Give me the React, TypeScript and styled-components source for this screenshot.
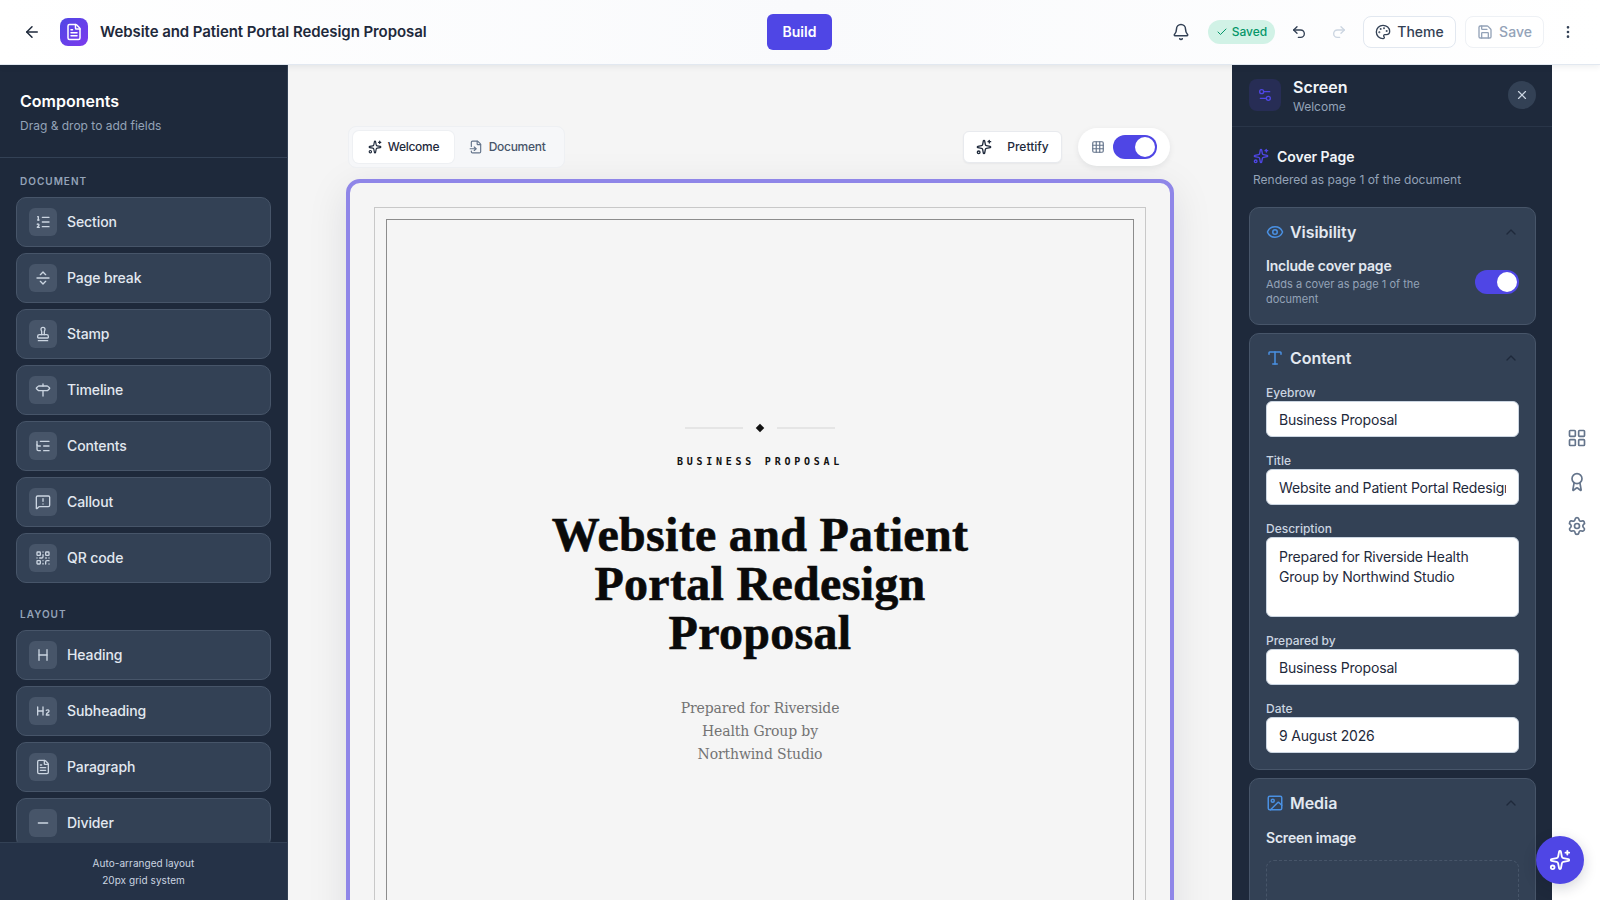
import React from 'react';
import styled, { createGlobalStyle } from 'styled-components';
import {
  ArrowLeft, Award, Bell, Check, ChevronUp, EllipsisVertical, Eye, FileInput, FileText, Grid3x3,
  Heading, Heading2, Image, LayoutGrid, ListOrdered, ListTree, MessageSquareWarning, Minus, Palette,
  QrCode, Redo2, Save, Settings, Settings2, Signpost, Sparkles, Stamp, Type, Undo2, X,
} from 'lucide-react';

const GlobalStyle = createGlobalStyle`
  html, body { margin: 0; height: 100%; overflow: hidden; }
  body { font-family: Inter, "Liberation Sans", sans-serif; background: #f5f5f5; }
  * { box-sizing: border-box; }
`;

// lucide has no line with a chevron on each side
const PageBreakIcon = ({ size = 16 }: { size?: number }) => (
  <svg width={size} height={size} viewBox="0 0 24 24" fill="none" stroke="currentColor" strokeWidth="2" strokeLinecap="round" strokeLinejoin="round">
    <path d="M3 12h18" />
    <path d="m8 7 4-4 4 4" />
    <path d="m8 17 4 4 4-4" />
  </svg>
);

const documentItems = [
  { label: 'Section', icon: ListOrdered },
  { label: 'Page break', icon: PageBreakIcon },
  { label: 'Stamp', icon: Stamp },
  { label: 'Timeline', icon: Signpost },
  { label: 'Contents', icon: ListTree },
  { label: 'Callout', icon: MessageSquareWarning },
  { label: 'QR code', icon: QrCode },
];

const layoutItems = [
  { label: 'Heading', icon: Heading },
  { label: 'Subheading', icon: Heading2 },
  { label: 'Paragraph', icon: FileText },
  { label: 'Divider', icon: Minus },
];

function App() {
  return (
    <Shell>
      <GlobalStyle />
      <Header>
        <HeaderLeft>
          <BackButton><ArrowLeft size={18} /></BackButton>
          <Logo><FileText size={18} /></Logo>
          <DocTitle>Website and Patient Portal Redesign Proposal</DocTitle>
        </HeaderLeft>
        <BuildButton>Build</BuildButton>
        <HeaderRight>
          <HeaderIcon $left={0}><Bell size={18} /></HeaderIcon>
          <SavedPill><Check size={12} />Saved</SavedPill>
          <HeaderIcon $left={13}><Undo2 size={16} /></HeaderIcon>
          <HeaderIcon $left={18} $muted><Redo2 size={16} /></HeaderIcon>
          <OutlineButton $width={93} $left={13}><Palette size={16} />Theme</OutlineButton>
          <OutlineButton $width={79} $left={9} $muted><Save size={16} />Save</OutlineButton>
          <HeaderIcon $left={13}><EllipsisVertical size={16} /></HeaderIcon>
        </HeaderRight>
      </Header>

      <Body>
        <Sidebar>
          <SidebarHead>
            <SidebarTitle>Components</SidebarTitle>
            <SidebarSub>Drag &amp; drop to add fields</SidebarSub>
          </SidebarHead>
          <SidebarList>
            <GroupLabel>Document</GroupLabel>
            <ItemStack>
              {documentItems.map((item) => (
                <Item key={item.label}>
                  <ItemIcon><item.icon size={16} /></ItemIcon>
                  <ItemLabel>{item.label}</ItemLabel>
                </Item>
              ))}
            </ItemStack>
            <GroupLabel $second>Layout</GroupLabel>
            <ItemStack>
              {layoutItems.map((item) => (
                <Item key={item.label}>
                  <ItemIcon><item.icon size={16} /></ItemIcon>
                  <ItemLabel>{item.label}</ItemLabel>
                </Item>
              ))}
            </ItemStack>
          </SidebarList>
          <SidebarFoot>
            <div>Auto-arranged layout</div>
            <div>20px grid system</div>
          </SidebarFoot>
        </Sidebar>

        <Canvas>
          <CanvasBar>
            <Tabs>
              <Tab $active><Sparkles size={14} />Welcome</Tab>
              <Tab><FileInput size={14} />Document</Tab>
            </Tabs>
            <CanvasTools>
              <PrettifyButton><Sparkles size={16} />Prettify</PrettifyButton>
              <GridToggle>
                <Grid3x3 size={14} color="#64748b" />
                <Toggle />
              </GridToggle>
            </CanvasTools>
          </CanvasBar>
          <Page>
            <OuterFrame>
              <InnerFrame>
                <Ornament>
                  <OrnamentLine />
                  <Diamond />
                  <OrnamentLine />
                </Ornament>
                <Eyebrow>Business Proposal</Eyebrow>
                <CoverTitle>Website and Patient Portal Redesign Proposal</CoverTitle>
                <CoverDescription>Prepared for Riverside Health Group by Northwind Studio</CoverDescription>
              </InnerFrame>
            </OuterFrame>
          </Page>
        </Canvas>

        <Panel>
          <PanelHead>
            <PanelIcon><Settings2 size={16} /></PanelIcon>
            <PanelHeadText>
              <PanelTitle>Screen</PanelTitle>
              <PanelSub>Welcome</PanelSub>
            </PanelHeadText>
            <CloseButton><X size={14} /></CloseButton>
          </PanelHead>
          <PanelBody>
            <CoverHead><Sparkles size={16} color="#4f46e5" />Cover Page</CoverHead>
            <CoverSub>Rendered as page 1 of the document</CoverSub>

            <Card>
              <CardHead>
                <Eye size={18} color="#4a90e2" />
                <CardTitle>Visibility</CardTitle>
                <ChevronUp size={16} color="#1e293b" />
              </CardHead>
              <IncludeRow>
                <div>
                  <IncludeTitle>Include cover page</IncludeTitle>
                  <IncludeSub>Adds a cover as page 1 of the document</IncludeSub>
                </div>
                <Toggle />
              </IncludeRow>
            </Card>

            <Card>
              <CardHead>
                <Type size={18} color="#4a90e2" />
                <CardTitle>Content</CardTitle>
                <ChevronUp size={16} color="#1e293b" />
              </CardHead>
              <FieldLabel>Eyebrow</FieldLabel>
              <TextField readOnly value="Business Proposal" />
              <FieldLabel>Title</FieldLabel>
              <TextField readOnly value="Website and Patient Portal Redesign Proposal" />
              <FieldLabel>Description</FieldLabel>
              <TextArea readOnly value="Prepared for Riverside Health Group by Northwind Studio" />
              <FieldLabel>Prepared by</FieldLabel>
              <TextField readOnly value="Business Proposal" />
              <FieldLabel>Date</FieldLabel>
              <TextField readOnly value="9 August 2026" />
            </Card>

            <Card>
              <CardHead>
                <Image size={18} color="#4a90e2" />
                <CardTitle>Media</CardTitle>
                <ChevronUp size={16} color="#1e293b" />
              </CardHead>
              <ScreenImageLabel>Screen image</ScreenImageLabel>
              <DropZone />
            </Card>
          </PanelBody>
        </Panel>

        <Rail>
          <LayoutGrid size={20} />
          <Award size={20} />
          <Settings size={20} />
        </Rail>
      </Body>

      <Fab><Sparkles size={22} /></Fab>
    </Shell>
  );
}

export default App;

const Shell = styled.div`
  height: 100vh;
  display: flex;
  flex-direction: column;
  overflow: hidden;
`;

const Header = styled.header`
  position: relative;
  z-index: 5;
  height: 65px;
  flex: none;
  display: grid;
  grid-template-columns: 1fr auto 1fr;
  align-items: center;
  padding: 0 21px 1px 22px;
  background: linear-gradient(90deg, #ffffff, #f9fafc 50%, #ffffff);
  border-bottom: 1px solid #e2e8f0;
  box-shadow: 0 2px 6px rgba(15, 23, 42, 0.07);
`;

const HeaderLeft = styled.div`
  display: flex;
  align-items: center;
`;

const BackButton = styled.div`
  width: 20px;
  display: flex;
  justify-content: center;
  color: #1e293b;
`;

const Logo = styled.div`
  width: 28px;
  height: 28px;
  margin-left: 18px;
  border-radius: 8px;
  display: flex;
  align-items: center;
  justify-content: center;
  color: #fff;
  background: linear-gradient(135deg, #4f46e5, #7c3aed);
`;

const DocTitle = styled.div`
  margin-left: 12px;
  font-size: 15px;
  font-weight: 600;
  letter-spacing: -0.07px;
  color: #1e293b;
  white-space: nowrap;
`;

const BuildButton = styled.button`
  width: 65px;
  height: 36px;
  margin-left: -2px;
  border: none;
  border-radius: 6px;
  background: #4f46e5;
  color: #fff;
  font: 600 14px Inter, sans-serif;
`;

const HeaderRight = styled.div`
  display: flex;
  align-items: center;
  justify-content: flex-end;
`;

const HeaderIcon = styled.div<{ $left: number; $muted?: boolean }>`
  width: 22px;
  margin-left: ${(p) => p.$left}px;
  display: flex;
  justify-content: center;
  color: ${(p) => (p.$muted ? '#cbd5e1' : '#334155')};
`;

const SavedPill = styled.div`
  width: 67px;
  height: 24px;
  margin-left: 16px;
  border-radius: 12px;
  display: flex;
  align-items: center;
  justify-content: center;
  gap: 4px;
  background: #d1f2e6;
  color: #059669;
  font-size: 12px;
  font-weight: 500;
`;

const OutlineButton = styled.div<{ $width: number; $left: number; $muted?: boolean }>`
  width: ${(p) => p.$width}px;
  height: 32px;
  margin-left: ${(p) => p.$left}px;
  border: 1px solid ${(p) => (p.$muted ? '#eef1f5' : '#e2e8f0')};
  border-radius: 8px;
  display: flex;
  align-items: center;
  justify-content: center;
  gap: 6px;
  background: #fff;
  color: ${(p) => (p.$muted ? '#94a3b8' : '#334155')};
  font-size: 14px;
  font-weight: 500;
`;

const Body = styled.div`
  flex: 1;
  min-height: 0;
  display: flex;
`;

const Sidebar = styled.aside`
  width: 288px;
  flex: none;
  display: flex;
  flex-direction: column;
  background: #1e293b;
  border-right: 1px solid #334155;
`;

const SidebarHead = styled.div`
  height: 93px;
  flex: none;
  padding: 25px 20px 0;
  border-bottom: 1px solid #334155;
`;

const SidebarTitle = styled.div`
  font-size: 16px;
  line-height: 22px;
  font-weight: 600;
  color: #fff;
`;

const SidebarSub = styled.div`
  margin-top: 6px;
  font-size: 12px;
  line-height: 16px;
  color: #94a3b8;
`;

const SidebarList = styled.div`
  flex: 1;
  min-height: 0;
  overflow: hidden;
  padding: 16px 16px 0;
`;

const GroupLabel = styled.div<{ $second?: boolean }>`
  margin: ${(p) => (p.$second ? '24px' : '0')} 0 9px 4px;
  font-size: 10px;
  line-height: 14px;
  font-weight: 600;
  letter-spacing: 1px;
  text-transform: uppercase;
  color: #94a3b8;
`;

const ItemStack = styled.div`
  display: flex;
  flex-direction: column;
  gap: 6px;
`;

const Item = styled.div`
  height: 50px;
  flex: none;
  padding: 0 12px;
  display: flex;
  align-items: center;
  gap: 10px;
  border: 1px solid #475569;
  border-radius: 10px;
  background: #334155;
  color: #e2e8f0;
  font-size: 14px;
  font-weight: 500;
  letter-spacing: -0.1px;
`;

const ItemLabel = styled.span`
  margin-top: -2px;
`;

const ItemIcon = styled.div`
  width: 28px;
  height: 28px;
  border-radius: 6px;
  display: flex;
  align-items: center;
  justify-content: center;
  background: #475569;
  color: #cbd5e1;
`;

const SidebarFoot = styled.div`
  height: 58px;
  flex: none;
  padding-top: 12px;
  border-top: 1px solid #334155;
  background: #253247;
  color: #cbd5e1;
  font-size: 10px;
  line-height: 17px;
  letter-spacing: 0.05px;
  text-align: center;
`;

const Canvas = styled.main`
  flex: 1;
  min-width: 0;
  overflow: hidden;
  padding: 61px 58px 0;
`;

const CanvasBar = styled.div`
  height: 41px;
  margin-bottom: 12px;
  padding: 0 4px 0 2px;
  display: flex;
  align-items: center;
  justify-content: space-between;
`;

const Tabs = styled.div`
  padding: 4px;
  display: flex;
  border: 1px solid #eef0f3;
  border-radius: 8px;
  background: #f6f7f9;
`;

const Tab = styled.div<{ $active?: boolean }>`
  height: 32px;
  padding: 0 14.75px;
  display: flex;
  align-items: center;
  gap: 6px;
  border-radius: 6px;
  background: ${(p) => (p.$active ? '#fff' : 'transparent')};
  box-shadow: ${(p) => (p.$active ? '0 0 0 1px #eef0f3' : 'none')};
  color: ${(p) => (p.$active ? '#1e293b' : '#475569')};
  font-size: 12px;
  font-weight: 500;
  letter-spacing: -0.28px;
  svg { color: ${(p) => (p.$active ? '#1e293b' : '#64748b')}; }
`;

const CanvasTools = styled.div`
  display: flex;
  align-items: center;
  gap: 16px;
`;

const PrettifyButton = styled.div`
  width: 99px;
  height: 32px;
  display: flex;
  align-items: center;
  justify-content: center;
  gap: 15px;
  border: 1px solid #e8eaee;
  border-radius: 6px;
  background: #fff;
  box-shadow: 0 1px 2px rgba(15, 23, 42, 0.05);
  color: #1e293b;
  font-size: 12px;
  font-weight: 500;
`;

const GridToggle = styled.div`
  width: 92px;
  height: 38px;
  padding: 0 13px;
  display: flex;
  align-items: center;
  justify-content: space-between;
  border-radius: 19px;
  background: #fff;
  box-shadow: 0 2px 6px rgba(15, 23, 42, 0.08);
`;

const Toggle = styled.div`
  position: relative;
  width: 44px;
  height: 24px;
  flex: none;
  border-radius: 12px;
  background: #4f46e5;
  &::after {
    content: '';
    position: absolute;
    top: 2px;
    right: 2px;
    width: 20px;
    height: 20px;
    border-radius: 50%;
    background: #fff;
  }
`;

const Page = styled.div`
  width: 828px;
  min-height: 900px;
  padding: 24px;
  border: 4px solid #8f86e8;
  border-radius: 14px;
  background: #f5f5f5;
  box-shadow: 0 10px 40px rgba(15, 23, 42, 0.1);
`;

const OuterFrame = styled.div`
  min-height: 800px;
  padding: 11px;
  border: 1px solid #c8c8c8;
`;

const InnerFrame = styled.div`
  min-height: 780px;
  padding-top: 205px;
  display: flex;
  flex-direction: column;
  align-items: center;
  border: 1px solid #8c8c8c;
`;

const Ornament = styled.div`
  display: flex;
  align-items: center;
  gap: 14px;
`;

const OrnamentLine = styled.div`
  width: 58px;
  height: 2px;
  background: #e5e5e5;
`;

const Diamond = styled.div`
  width: 6px;
  height: 6px;
  background: #111;
  transform: rotate(45deg);
`;

const Eyebrow = styled.div`
  margin-top: 18px;
  font-family: "DejaVu Sans Mono", "Liberation Mono", monospace;
  font-size: 10px;
  line-height: 26px;
  font-weight: 700;
  letter-spacing: 3.75px;
  text-transform: uppercase;
  color: #111;
`;

const CoverTitle = styled.h1`
  width: 470px;
  margin: 35px 0 0;
  font-family: "Liberation Serif", "DejaVu Serif", serif;
  font-size: 48px;
  line-height: 49px;
  font-weight: 700;
  letter-spacing: 0.3px;
  -webkit-text-stroke: 0.6px #0a0a0a;
  text-align: center;
  color: #0a0a0a;
`;

const CoverDescription = styled.p`
  width: 180px;
  margin: 40px 0 0;
  font-family: "DejaVu Serif", "Liberation Serif", serif;
  font-size: 14px;
  line-height: 23px;
  letter-spacing: -0.14px;
  text-align: center;
  color: #737373;
`;

const Panel = styled.aside`
  width: 320px;
  flex: none;
  overflow: hidden;
  background: #1e293b;
`;

const PanelHead = styled.div`
  height: 62px;
  padding: 0 16px 1px 17px;
  display: flex;
  align-items: center;
  gap: 12px;
  border-bottom: 1px solid #293548;
`;

const PanelIcon = styled.div`
  width: 32px;
  height: 32px;
  border-radius: 8px;
  display: flex;
  align-items: center;
  justify-content: center;
  background: #272d55;
  color: #4f46e5;
`;

const PanelHeadText = styled.div`
  flex: 1;
  padding-top: 2px;
`;

const PanelTitle = styled.div`
  font-size: 16px;
  line-height: 20px;
  font-weight: 600;
  color: #f1f5f9;
`;

const PanelSub = styled.div`
  margin-top: 1px;
  font-size: 12px;
  line-height: 18px;
  color: #94a3b8;
`;

const CloseButton = styled.div`
  width: 28px;
  height: 28px;
  border-radius: 50%;
  display: flex;
  align-items: center;
  justify-content: center;
  background: #334155;
  color: #cbd5e1;
`;

const PanelBody = styled.div`
  padding: 19px 16px 0 17px;
`;

const CoverHead = styled.div`
  height: 20px;
  margin-left: 4px;
  display: flex;
  align-items: center;
  gap: 8px;
  font-size: 14px;
  font-weight: 600;
  letter-spacing: -0.05px;
  color: #f1f5f9;
`;

const CoverSub = styled.div`
  margin: 5px 0 18px 4px;
  font-size: 12px;
  line-height: 18px;
  color: #94a3b8;
`;

const Card = styled.section`
  margin-bottom: 8px;
  padding: 13px 16px 16px;
  border: 1px solid #475569;
  border-radius: 10px;
  background: #334155;
`;

const CardHead = styled.div`
  height: 22px;
  margin-bottom: 13px;
  display: flex;
  align-items: center;
  gap: 6px;
`;

const CardTitle = styled.div`
  flex: 1;
  font-size: 16px;
  font-weight: 600;
  letter-spacing: -0.05px;
  color: #e2e8f0;
`;

const IncludeRow = styled.div`
  padding-bottom: 1px;
  display: flex;
  align-items: center;
  justify-content: space-between;
  gap: 16px;
`;

const IncludeTitle = styled.div`
  font-size: 14px;
  line-height: 20px;
  font-weight: 600;
  letter-spacing: -0.2px;
  color: #e2e8f0;
`;

const IncludeSub = styled.div`
  margin-top: 1px;
  font-size: 11px;
  line-height: 15px;
  letter-spacing: 0;
  color: #94a3b8;
`;

const FieldLabel = styled.div`
  padding-top: 3px;
  font-size: 12px;
  line-height: 16px;
  font-weight: 500;
  color: #cbd5e1;
  input + &, textarea + & { margin-top: 13px; }
`;

const TextField = styled.input`
  display: block;
  width: 100%;
  height: 36px;
  padding: 0 12px;
  border: 1px solid #cbd5e1;
  border-radius: 6px;
  background: #fff;
  color: #1e293b;
  font: 400 14px Inter, sans-serif;
  letter-spacing: -0.18px;
  outline: none;
`;

const TextArea = styled.textarea`
  display: block;
  width: 100%;
  height: 80px;
  padding: 9px 12px;
  border: 1px solid #cbd5e1;
  border-radius: 6px;
  background: #fff;
  color: #1e293b;
  font: 400 14px/20px Inter, sans-serif;
  letter-spacing: -0.18px;
  outline: none;
  resize: none;
`;

const ScreenImageLabel = styled(IncludeTitle)`
  padding-top: 1px;
`;

const DropZone = styled.div`
  height: 120px;
  margin-top: 12px;
  border: 1px dashed #475569;
  border-radius: 8px;
`;

const Rail = styled.div`
  width: 48px;
  flex: none;
  padding: 363px 0 0 1px;
  display: flex;
  flex-direction: column;
  align-items: center;
  gap: 24px;
  background: #fff;
  color: #64748b;
`;

const Fab = styled.div`
  position: fixed;
  left: 1536px;
  top: 836px;
  width: 48px;
  height: 48px;
  border-radius: 50%;
  display: flex;
  align-items: center;
  justify-content: center;
  background: #4f46e5;
  color: #fff;
  box-shadow: 0 4px 14px rgba(15, 23, 42, 0.18);
`;
